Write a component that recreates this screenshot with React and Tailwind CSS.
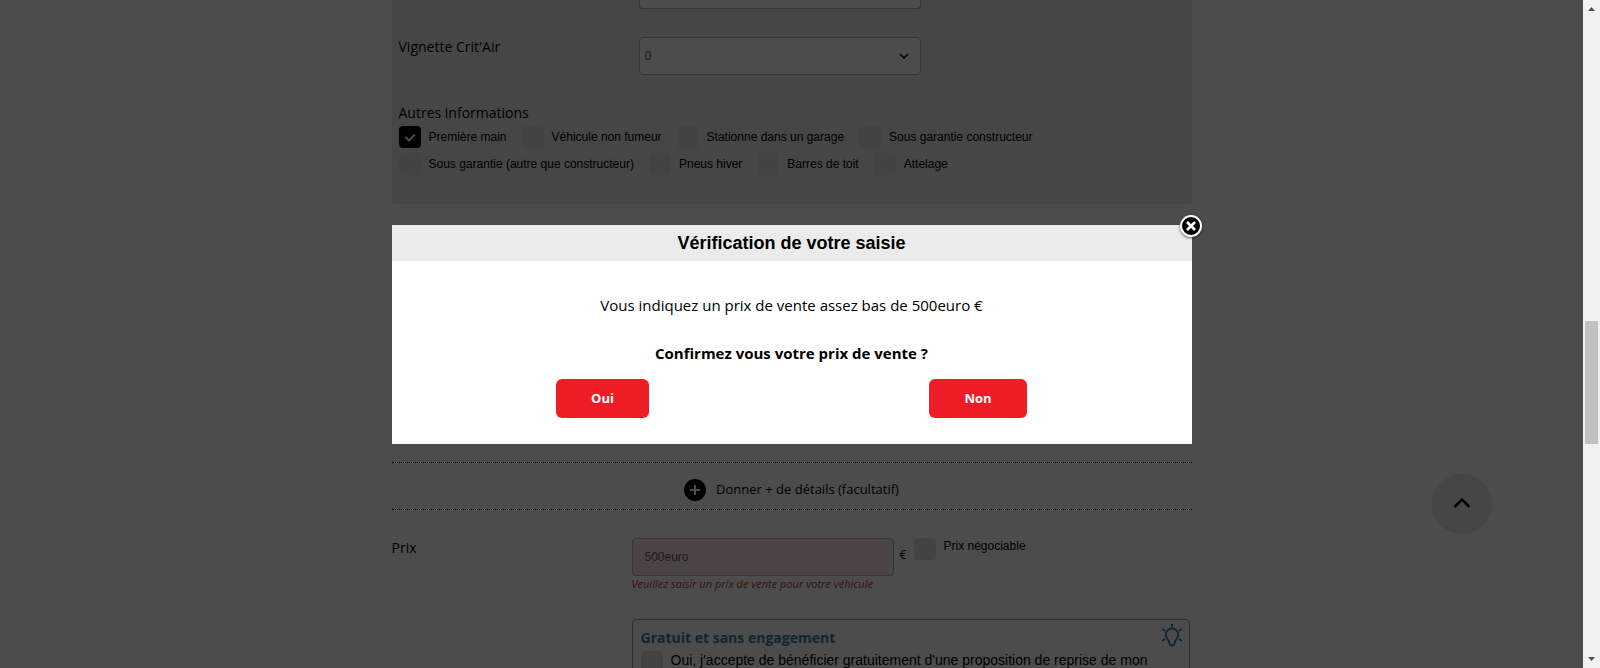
import React from "react";

const OPTION_ROWS = [
  [
    { id: "premiere-main", label: "Première main", checked: true },
    { id: "non-fumeur", label: "Véhicule non fumeur" },
    { id: "garage", label: "Stationne dans un garage" },
    { id: "garantie-constructeur", label: "Sous garantie constructeur" },
  ],
  [
    { id: "garantie-autre", label: "Sous garantie (autre que constructeur)" },
    { id: "pneus-hiver", label: "Pneus hiver" },
    { id: "barres-toit", label: "Barres de toit" },
    { id: "attelage", label: "Attelage" },
  ],
];

function CheckBox({ id, defaultChecked }) {
  return (
    <span className="grid size-[22px] shrink-0 place-items-center">
      <input
        id={id}
        type="checkbox"
        defaultChecked={defaultChecked}
        className="peer col-start-1 row-start-1 size-[22px] appearance-none rounded bg-[#e2e2e2] checked:bg-black"
      />
      <svg
        viewBox="0 0 22 22"
        className="pointer-events-none col-start-1 row-start-1 hidden size-[22px] peer-checked:block"
        fill="none"
        stroke="#fff"
        strokeWidth="2"
      >
        <path d="M6.5 11l3.5 3.5 6-6" />
      </svg>
    </span>
  );
}

function OptionCheck({ id, label, checked }) {
  return (
    <div className="flex gap-2">
      <CheckBox id={id} defaultChecked={checked} />
      <label htmlFor={id} className="font-['Liberation_Sans',sans-serif] text-xs leading-[22px]">
        {label}
      </label>
    </div>
  );
}

function BulbIcon() {
  return (
    <svg viewBox="0 0 22 24" className="h-6 w-[22px] shrink-0" fill="none" stroke="#2b7aa8" strokeWidth="1.9">
      <path
        d="M8.6 19.200c-.3-3-3.900-4.700-3.900-8.500a6.300 6.300 0 0 1 12.600 0c0 3.800-3.600 5.500-3.900 8.500-.1 1.700-.8 2.300-2.400 2.300s-2.300-.6-2.400-2.300z"
        strokeLinejoin="round"
      />
      <path d="M11 0v3.200M1 5l2.900 1.700M21 5l-2.900 1.700M1 16.800l2.900-1.700M21 16.800l-2.900-1.700" />
    </svg>
  );
}

function DetailsPanel() {
  return (
    <section className="rounded-b bg-[#e9e9e9] px-[7px] pb-[29px]">
      <div className="flex">
        <span className="w-[240px]" />
        <div className="h-[9px] w-[282px] rounded-b border border-t-0 border-[#b0b0b0] bg-white" />
      </div>
      <div className="flex pt-7">
        <label htmlFor="critair" className="w-[240px] text-sm leading-5">
          Vignette Crit'Air
        </label>
        <div className="relative w-[282px]">
          <select
            id="critair"
            defaultValue="0"
            className="h-[38px] w-full appearance-none rounded border border-[#b0b0b0] bg-white px-[5px] text-xs text-[#555]"
          >
            <option value="0">0</option>
            <option value="1">1</option>
          </select>
          <svg
            viewBox="0 0 10 6"
            className="pointer-events-none absolute top-4 right-3 h-1.5 w-2.5"
            fill="none"
            stroke="#000"
            strokeWidth="1.6"
          >
            <path d="M1 1l4 4 4-4" />
          </svg>
        </div>
      </div>
      <fieldset className="flex flex-col gap-[5px] pt-[29px]">
        <legend className="contents">
          <span className="block text-sm leading-[17px]">Autres informations</span>
        </legend>
        {OPTION_ROWS.map((row, i) => (
          <div key={i} className="flex gap-[15px]">
            {row.map((option) => (
              <OptionCheck key={option.id} {...option} />
            ))}
          </div>
        ))}
      </fieldset>
    </section>
  );
}

function PriceSection() {
  return (
    <section className="flex pt-7">
      <label htmlFor="price" className="w-[240px] shrink-0 text-sm leading-5">
        Prix
      </label>
      <div className="flex-1">
        <div className="flex">
          <input
            id="price"
            type="text"
            defaultValue="500euro"
            className="h-[38px] w-[262px] rounded border border-[#b0b0b0] bg-[#ffe4e4] px-3 font-['Liberation_Sans',sans-serif] text-xs text-[#555]"
          />
          <span className="w-5 pl-1.5 text-xs leading-[34px]">€</span>
          <CheckBox id="negotiable" />
          <label
            htmlFor="negotiable"
            className="pl-2 font-['Liberation_Sans',sans-serif] text-xs leading-4"
          >
            Prix négociable
          </label>
        </div>
        <p className="text-[11px] leading-4 text-[#b43c3c] italic">
          Veuillez saisir un prix de vente pour votre véhicule
        </p>
        <div className="mt-[27px] mr-0.5 rounded border border-[#6fa5c4] pt-1 pr-1.5 pl-2">
          <div className="flex justify-between">
            <h2 className="pt-1 text-sm leading-5 font-bold text-[#3a7ca5]">Gratuit et sans engagement</h2>
            <BulbIcon />
          </div>
          <div className="flex gap-2 pt-[3px]">
            <CheckBox id="offer" />
            <label htmlFor="offer" className="font-['Liberation_Sans',sans-serif] text-sm leading-[18px]">
              Oui, j'accepte de bénéficier gratuitement d'une proposition de reprise de mon véhicule
            </label>
          </div>
        </div>
      </div>
    </section>
  );
}

function ConfirmDialog() {
  return (
    <div
      role="dialog"
      aria-modal="true"
      aria-labelledby="dialog-title"
      className="relative w-[800px] bg-white pb-[26px] text-center text-black"
    >
      <h1
        id="dialog-title"
        className="bg-[#ebebeb] font-['Liberation_Sans',sans-serif] text-lg leading-9 font-bold"
      >
        Vérification de votre saisie
      </h1>
      <p className="pt-8 text-[15px] leading-6">Vous indiquez un prix de vente assez bas de 500euro €</p>
      <p className="pt-6 text-[15px] leading-6 font-bold">Confirmez vous votre prix de vente ?</p>
      <div className="flex justify-center gap-[280px] pt-3.5 text-[13px] font-bold text-white">
        <button className="h-[39px] w-[93px] rounded-md bg-[#ee1c25] pt-px">Oui</button>
        <button className="h-[39px] w-[98px] rounded-md bg-[#ee1c25] pt-px">Non</button>
      </div>
      <button
        aria-label="Fermer"
        className="absolute -top-2.5 -right-2.5 grid size-[22px] place-items-center rounded-full border-2 border-white bg-black shadow-[0_1px_3px_rgba(0,0,0,0.6)]"
      >
        <svg viewBox="0 0 10 10" className="size-2.5" stroke="#fff" strokeWidth="2.6">
          <path d="M1 1l8 8M9 1L1 9" />
        </svg>
      </button>
    </div>
  );
}

function ScrollRail() {
  return (
    <div aria-hidden="true" className="flex w-[17px] shrink-0 flex-col items-center justify-between bg-[#f1f1f1]">
      <svg viewBox="0 0 17 17" className="size-[17px]" fill="#505050">
        <path d="M5 11h7L8.500 7z" />
      </svg>
      <div className="flex w-full flex-1 flex-col items-center">
        <span className="flex-[304]" />
        <span className="w-[13px] flex-[123] bg-[#c1c1c1]" />
        <span className="flex-[207]" />
      </div>
      <svg viewBox="0 0 17 17" className="size-[17px]" fill="#505050">
        <path d="M5 6h7l-3.500 4z" />
      </svg>
    </div>
  );
}

export default function App() {
  return (
    <div className="flex h-screen overflow-hidden bg-white font-['Open_Sans','Noto_Sans',sans-serif] text-black">
      <div className="relative flex-1 overflow-hidden">
        <main className="mx-auto w-[800px]">
          <DetailsPanel />
          <div className="mt-[258px] flex items-center justify-center border-y border-dotted border-black">
            <button className="flex h-[46px] items-center gap-2.5 pt-2 text-[13px]">
              <svg viewBox="0 0 22 22" className="size-[22px]" fill="#000">
                <circle cx="11" cy="11" r="11" />
                <path d="M11 6v10M6 11h10" stroke="#fff" strokeWidth="2" />
              </svg>
              Donner + de détails (facultatif)
            </button>
          </div>
          <PriceSection />
        </main>
        <button
          aria-label="Haut de page"
          className="absolute right-[92px] bottom-[136px] grid size-[58px] place-items-center rounded-full bg-[#ebebeb] shadow-[0_1px_3px_rgba(0,0,0,0.2)]"
        >
          <svg viewBox="0 0 18 12" className="h-3 w-[18px]" fill="none" stroke="#000" strokeWidth="2.5">
            <path d="M1.500 10L9 2.500 16.500 10" />
          </svg>
        </button>
        <div className="absolute inset-0 flex items-center justify-center bg-black/70">
          <ConfirmDialog />
        </div>
      </div>
      <ScrollRail />
    </div>
  );
}
